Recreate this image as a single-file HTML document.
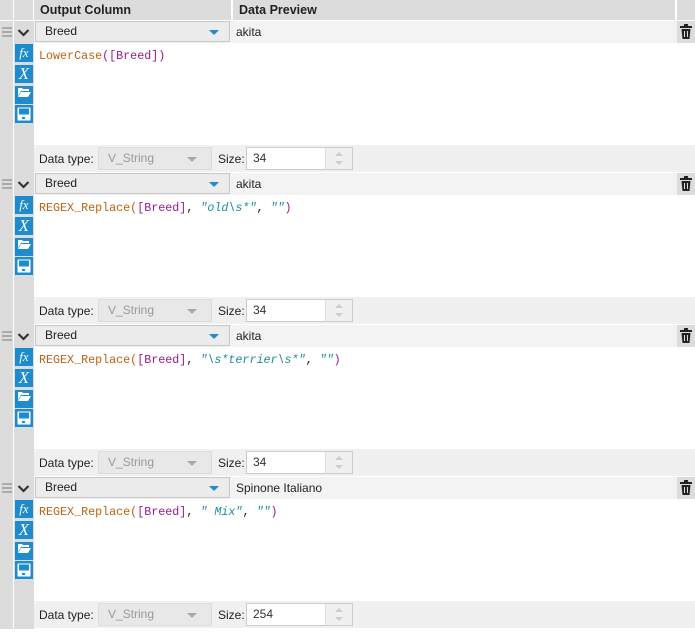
<!DOCTYPE html>
<html><head><meta charset="utf-8"><style>
*{margin:0;padding:0;box-sizing:border-box}
body{width:695px;height:629px;background:#fff;position:relative;overflow:hidden;font-family:"Liberation Sans",sans-serif;font-size:12px;color:#222}
.a{position:absolute}
.hdr{top:0;height:20px;background:#dcdcdc;font-weight:bold;font-size:12.5px;line-height:20px}
.gut{background:#dcdcdc}
.row{height:22px;background:#f3f3f3}
.dd{left:35px;width:195px;height:21px;border:1px solid #c8c8c8;background:#ececec;line-height:19px;padding-left:9px}
.tri{position:absolute;right:10px;top:8px;border-left:5px solid transparent;border-right:5px solid transparent;border-top:5px solid #1e8ccc}
.prev{left:236px;line-height:22px}
.trash{left:677px;width:18px;height:22px;background:#dcdcdc;text-align:center}
.ic{left:15px;width:18px;height:18px;background:#1e8ccc;color:#fff;text-align:center;font-family:"Liberation Serif",serif;font-style:italic;line-height:18px;font-size:14px}
.code{left:39px;font-family:"Liberation Mono",monospace;font-size:11.7px;white-space:pre;color:#c06010}
.p{color:#9a1a8a}.s{color:#1a8fa0;font-style:italic}.k{color:#222}
.bar{left:34px;width:661px;height:27px;background:#f0f0f0}
.lbl{line-height:28px}
.sel{width:114px;height:23px;border:1px solid #ddd;background:#e8e8e8;color:#999;line-height:21px;padding-left:9px}
.sel .tri{border-top-color:#aaa;right:14px;top:9px}
.inp{width:107px;height:23px;border:1px solid #ccc;background:#fff;line-height:21px;padding-left:6px;color:#333}
.spin{position:absolute;right:0;top:0;width:27px;height:21px;background:#f0f0f0;border-left:1px solid #ddd}
</style></head><body>
<div class="a hdr" style="left:0;width:13px"></div>
<div class="a hdr" style="left:14px;width:19px"></div>
<div class="a hdr" style="left:34px;width:197px;padding-left:6px">Output Column</div>
<div class="a hdr" style="left:233px;width:442px;padding-left:6px">Data Preview</div>
<div class="a hdr" style="left:677px;width:18px"></div>
<div class="a gut" style="left:0;top:21px;width:13px;height:608px"></div>
<div class="a gut" style="left:14px;top:21px;width:20px;height:608px"></div>
<div id="blocks"></div>
<script>
var data=[
 ['akita','LowerCase<span class="p">([Breed])</span>','34'],
 ['akita','REGEX_Replace(<span class="p">[Breed]</span><span class="k">, </span><span class="s">"old\\s*"</span><span class="k">, </span><span class="s">""</span><span class="p">)</span>','34'],
 ['akita','REGEX_Replace(<span class="p">[Breed]</span><span class="k">, </span><span class="s">"\\s*terrier\\s*"</span><span class="k">, </span><span class="s">""</span><span class="p">)</span>','34'],
 ['Spinone Italiano','REGEX_Replace(<span class="p">[Breed]</span><span class="k">, </span><span class="s">" Mix"</span><span class="k">, </span><span class="s">""</span><span class="p">)</span>','254']
];
var h='';
data.forEach(function(d,i){var t=21+i*152;
h+='<div class="a" style="left:2px;top:'+(t+6)+'px;width:10px;height:2px;background:#aaa;box-shadow:0 4px 0 #aaa,0 8px 0 #aaa"></div>';
h+='<svg class="a" style="left:17px;top:'+(t+7)+'px" width="13" height="9" viewBox="0 0 13 9"><polyline points="1.5,2 6.5,7 11.5,2" fill="none" stroke="#333" stroke-width="2.2"/></svg>';
h+='<div class="a row" style="left:34px;top:'+t+'px;width:661px"></div>';
h+='<div class="a dd" style="top:'+t+'px">Breed<span class="tri"></span></div>';
h+='<div class="a prev" style="top:'+t+'px">'+d[0]+'</div>';
h+='<div class="a trash" style="top:'+t+'px"><svg width="12" height="16" viewBox="0 0 12 16" style="margin-top:3px"><rect x="4" y="0" width="4" height="2" fill="#222"/><rect x="0" y="2" width="12" height="2" fill="#222"/><path d="M1.5 5h9l-1 10h-7z" fill="#222"/><path d="M4.5 7v6M7.5 7v6" stroke="#ddd" stroke-width="1"/></svg></div>';
h+='<div class="a" style="left:34px;top:'+(t+22)+'px;width:661px;height:102px;background:#fff"></div>';
h+='<div class="a ic" style="top:'+(t+23)+'px;font-size:13px">fx</div>';
h+='<div class="a ic" style="top:'+(t+44)+'px;font-size:17px">X</div>';
h+='<div class="a ic" style="top:'+(t+65)+'px"><svg width="14" height="12" viewBox="0 0 14 12"><path d="M1 2h4l1 1h6v2H4L1 10z" fill="#fff"/><path d="M4 6h10l-3 5H1z" fill="#fff"/></svg></div>';
h+='<div class="a ic" style="top:'+(t+84)+'px"><svg width="14" height="14" viewBox="0 0 14 14" style="margin-top:2px"><rect x="0.5" y="0.5" width="13" height="13" fill="#fff"/><rect x="2" y="1.5" width="10" height="6" fill="#1e8ccc"/><rect x="5" y="10" width="3" height="2" fill="#1e8ccc"/></svg></div>';
h+='<div class="a code" style="top:'+(t+28)+'px">'+d[1]+'</div>';
h+='<div class="a bar" style="top:'+(t+124)+'px"></div>';
h+='<div class="a lbl" style="left:39px;top:'+(t+124)+'px">Data type:</div>';
h+='<div class="a sel" style="left:98px;top:'+(t+126)+'px">V_String<span class="tri"></span></div>';
h+='<div class="a lbl" style="left:218px;top:'+(t+124)+'px">Size:</div>';
h+='<div class="a inp" style="left:246px;top:'+(t+126)+'px">'+d[2]+'<span class="spin"><svg width="26" height="21" viewBox="0 0 26 21"><path d="M9 8l4-4 4 4z" fill="#ccc"/><path d="M9 13l4 4 4-4z" fill="#ccc"/></svg></span></div>';
});
document.getElementById('blocks').innerHTML=h;
</script>
</body></html>
